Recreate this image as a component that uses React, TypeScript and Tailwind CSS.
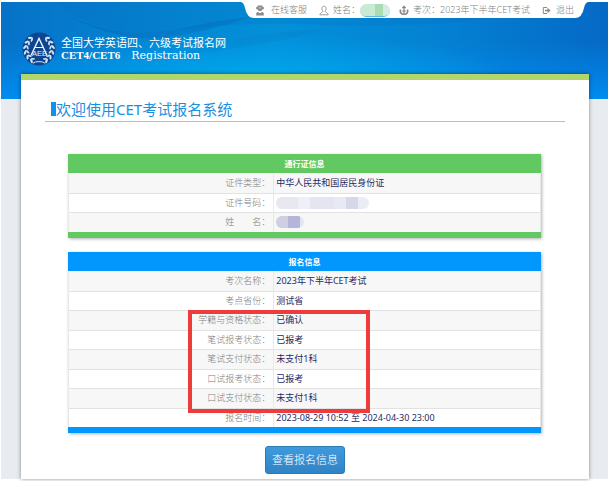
import React from 'react';

interface Row {
  label: string;
  value: React.ReactNode;
}

interface InfoTableProps {
  title: string;
  rows: Row[];
  captionClass: string;
  frameClass: string;
}

const InfoTable: React.FC<InfoTableProps> = ({ title, rows, captionClass, frameClass }) => (
  <div className={`border-b-[6px] shadow-[1px_1px_3px_rgba(0,0,0,0.3)] ${frameClass}`}>
    <table className="w-full table-fixed border-collapse text-[9px] leading-[12px]">
      <caption className={`h-[19px] text-[8px] leading-[19px] font-bold text-white ${captionClass}`}>{title}</caption>
      <tbody>
        {rows.map((row) => (
          <tr key={row.label} className="odd:h-[20px] even:h-[19px] odd:bg-[#f7f7f7] even:bg-white border-b border-[#e2e2e2] last:border-b-0">
            <th scope="row" className="w-[43.5%] p-0 pr-[3px] text-right font-light text-[#808080] border-x border-[#e8e8e8] whitespace-nowrap">
              {row.label}
            </th>
            <td className="p-0 pl-[2px] text-[#1f2a63] border-r border-[#e8e8e8] whitespace-nowrap">{row.value}</td>
          </tr>
        ))}
      </tbody>
    </table>
  </div>
);

const passRows: Row[] = [
  { label: '证件类型：', value: '中华人民共和国居民身份证' },
  {
    label: '证件号码：',
    value: (
      <span className="flex w-[93px] h-[12px] rounded-full overflow-hidden bg-[#ececf5]">
        <span className="w-[22px] bg-[#e8e8f1]"></span>
        <span className="w-[12px] bg-[#efeff8]"></span>
        <span className="w-[24px] bg-[#e5e5f1]"></span>
        <span className="w-[12px] bg-[#e9e9f5]"></span>
        <span className="w-[12px] bg-[#d6d8ea]"></span>
      </span>
    ),
  },
  {
    label: '姓\u3000\u3000名：',
    value: (
      <span className="flex w-[28px] h-[12px] rounded-full overflow-hidden bg-[#e4e5f3]">
        <span className="w-[12px] bg-[#cfcfe3]"></span>
        <span className="w-[12px] bg-[#b5b5d9]"></span>
      </span>
    ),
  },
];

const signupRows: Row[] = [
  { label: '考次名称：', value: '2023年下半年CET考试' },
  { label: '考点省份：', value: '测试省' },
  { label: '学籍与资格状态：', value: '已确认' },
  { label: '笔试报考状态：', value: '已报考' },
  { label: '笔试支付状态：', value: '未支付1科' },
  { label: '口试报考状态：', value: '已报考' },
  { label: '口试支付状态：', value: '未支付1科' },
  { label: '报名时间：', value: '2023-08-29 10:52 至 2024-04-30 23:00' },
];

const leafAngles = [38, 60, 82, 104, 126, 148];

const Emblem = () => (
  <svg viewBox="0 0 34 34" className="w-[34px] h-[34px] shrink-0" aria-hidden="true">
    <circle cx="17" cy="17" r="16.5" fill="#0d4590" />
    {['', 'translate(34 0) scale(-1 1)'].map((side) => (
      <g key={side} transform={side} fill="#d3e4f4">
        {leafAngles.map((a) => (
          <g key={a} transform={`rotate(${a} 17 17)`}>
            <ellipse cx="17" cy="2.8" rx="2.4" ry="1.1" transform="rotate(-35 17 2.8)" />
            <ellipse cx="17" cy="5.4" rx="2.2" ry="0.9" transform="rotate(30 17 5.4)" />
          </g>
        ))}
        <path d="M17 29.600Q21 29.500 23 31.200" stroke="#d3e4f4" strokeWidth="1" fill="none" />
      </g>
    ))}
    <path d="M9 23.500L17 6.500L25 23.500" stroke="#e9f3fb" strokeWidth="1.400" fill="none" />
    <path d="M12.500 15.500h9" stroke="#e9f3fb" strokeWidth="1" />
    <text x="17.500" y="23.500" textAnchor="middle" fontSize="7.500" fill="#e9f3fb" fontFamily="Liberation Sans, sans-serif">AEE</text>
  </svg>
);

const BannerArt = () => (
  <svg viewBox="0 0 607 97" preserveAspectRatio="none" className="absolute inset-0 w-full h-full" aria-hidden="true">
    <defs>
      <linearGradient id="sky" x1="0" x2="1" y1="0" y2="0">
        <stop offset="0" stopColor="#0672c8" />
        <stop offset="0.25" stopColor="#0485d2" />
        <stop offset="0.45" stopColor="#0390d9" />
        <stop offset="0.7" stopColor="#0483d3" />
        <stop offset="1" stopColor="#0569c5" />
      </linearGradient>
      <radialGradient id="glow" cx="0.42" cy="0.75" r="0.42">
        <stop offset="0" stopColor="#00a6e8" />
        <stop offset="1" stopColor="#00a6e8" stopOpacity="0" />
      </radialGradient>
      <linearGradient id="floor" x1="0" x2="0" y1="0" y2="1">
        <stop offset="0.4" stopColor="#0088ee" stopOpacity="0" />
        <stop offset="1" stopColor="#008cf0" />
      </linearGradient>
    </defs>
    <rect width="607" height="97" fill="url(#sky)" />
    <rect width="607" height="97" fill="url(#floor)" />
    <rect width="607" height="97" fill="url(#glow)" />
    <path d="M55 0Q95 34 160 30Q230 20 300 22Q400 28 490 16V0z" fill="#0565b4" fillOpacity="0.16" />
    <path d="M62 10Q110 38 175 28Q215 18 250 15Q205 30 160 36Q105 38 62 10z" fill="#0560ae" fillOpacity="0.3" />
    <path d="M180 52Q260 46 330 26Q270 30 215 40z" fill="#0568b8" fillOpacity="0.12" />
  </svg>
);

const AgentIcon = () => (
  <svg viewBox="0 0 10 11" className="w-[10px] h-[11px]" fill="#8a8a8a" aria-hidden="true">
    <path d="M2.500 .5h5v1.500h1.300v2.200H7.500Q7 6.200 5 6.200T2.500 4.200H1.200V2h1.300z" />
    <path d="M3.500 2.500h3v.8h-3z" fill="#d8d8d8" />
    <path d="M1.200 10.500V8.600Q1.200 7 3 7L5 8.200L7 7Q8.800 7 8.800 8.600V10.500z" />
  </svg>
);

const PersonIcon = () => (
  <svg viewBox="0 0 10 11" className="w-[10px] h-[11px]" fill="none" stroke="#9a9a9a" aria-hidden="true">
    <path d="M5 1.200C2.300 1.200 2.600 5 4 6.200C3.600 7.500 1 7.600 .8 9.800H9.200C9 7.600 6.400 7.500 6 6.200C7.400 5 7.700 1.200 5 1.200z" />
  </svg>
);

const ExamIcon = () => (
  <svg viewBox="0 0 10 11" className="w-[10px] h-[11px]" fill="none" stroke="#858585" aria-hidden="true">
    <path d="M1.500 4.500Q.5 9 5 9.200Q9.500 9 8.500 4.500" strokeWidth="1.600" />
    <path d="M5 1v7.500M3.300 3.200L5 1.300l1.700 1.900M3.200 6h3.600" strokeWidth="1.200" />
  </svg>
);

const ExitIcon = () => (
  <svg viewBox="0 0 9 9" className="w-[9px] h-[9px]" fill="none" stroke="#8a8a8a" aria-hidden="true">
    <path d="M5 1.500H1.300v6H5" />
    <path d="M3 3.700h2.500V1.800L8.600 4.500L5.500 7.200V5.300H3z" fill="#8a8a8a" stroke="none" />
  </svg>
);

const TopBar = () => (
  <nav className="relative flex justify-end pr-[20px]">
    <svg viewBox="0 0 14 16" className="w-[14px] h-[16px]" aria-hidden="true">
      <path d="M0 0Q3 1 4 6Q6 16 13 16H14V0z" fill="#fff" />
    </svg>
    <div className="flex items-center h-[16px] bg-white text-[9px] leading-[16px] font-light text-[#808080] whitespace-nowrap">
      <a href="#service" className="flex items-center gap-[6px]"><AgentIcon />在线客服</a>
      <span className="flex items-center gap-[4px] ml-[12px]">
        <PersonIcon />
        <span className="flex items-center">
          姓名：
          <span className="flex w-[30px] h-[13px] rounded-full overflow-hidden bg-[#d5ebe5] border-b border-[#63b9df]">
            <span className="w-[15px] bg-[#c9ebd3]"></span>
            <span className="w-[8px] bg-[#aadbb2]"></span>
          </span>
        </span>
      </span>
      <span className="flex items-center gap-[4px] ml-[9px]"><ExamIcon />考次：2023年下半年CET考试</span>
      <a href="#logout" className="flex items-center gap-[5px] ml-[12px]"><ExitIcon />退出</a>
    </div>
    <svg viewBox="0 0 14 16" className="w-[14px] h-[16px]" aria-hidden="true">
      <path d="M14 0Q11 1 10 6Q8 16 1 16H0V0z" fill="#fff" />
    </svg>
  </nav>
);

export default function App() {
  return (
    <div className="bg-white pt-[2px] pl-px pb-[2px] font-['Noto_Sans','Noto_Sans_CJK_SC',sans-serif]">
      <div className="bg-[#e8ecf1]">
        <header className="relative h-[97px]">
          <BannerArt />
          <TopBar />
          <div className="relative flex items-center gap-[5px] pl-[21px] pt-[14px] text-white">
            <Emblem />
            <div>
              <h1 className="text-[11px] leading-[13px] font-normal whitespace-nowrap">全国大学英语四、六级考试报名网</h1>
              <p className="flex items-baseline gap-[11px] text-[11px] leading-[12px]">
                <span className="font-['Liberation_Serif',serif] font-bold">CET4/CET6</span>
                <span className="font-['DejaVu_Serif',serif]">Registration</span>
              </p>
            </div>
          </div>
        </header>

        <main className="relative -mt-[25px] ml-[20px] mr-[19px] px-[24px] pb-[5px] bg-white border-t-[6px] border-[#b2d66b] shadow-[0_0_4px_rgba(0,0,0,0.45)]">
          <h2 className="flex items-center h-[42px] pt-[16px] pl-[6px] border-b border-[#bdbdbd] text-[15px] leading-[18px] font-normal text-[#1b8fe0]">
            <span className="w-[5px] h-[14px] bg-[#1291ee]"></span>
            欢迎使用CET考试报名系统
          </h2>

          <div className="flex flex-col gap-[14px] mt-[32px] ml-[23px] mr-[24px]">
            <InfoTable title="通行证信息" rows={passRows} captionClass="bg-[#62c962]" frameClass="border-[#62c962]" />
            <div className="relative">
              <InfoTable title="报名信息" rows={signupRows} captionClass="bg-[#0297fd]" frameClass="border-[#0297fd]" />
              <div className="absolute left-[120px] top-[58px] w-[182px] h-[103px] border-4 border-[#ee3b3b]"></div>
            </div>
          </div>

          <div className="flex justify-center mt-[13px]">
            <button type="button" className="h-[28px] px-[6px] rounded-[3px] border border-[#2a7ab5] bg-linear-to-b from-[#3f9ade] to-[#2f84c6] text-[11px] leading-[24px] font-light text-white">
              查看报名信息
            </button>
          </div>
        </main>
      </div>
    </div>
  );
}
